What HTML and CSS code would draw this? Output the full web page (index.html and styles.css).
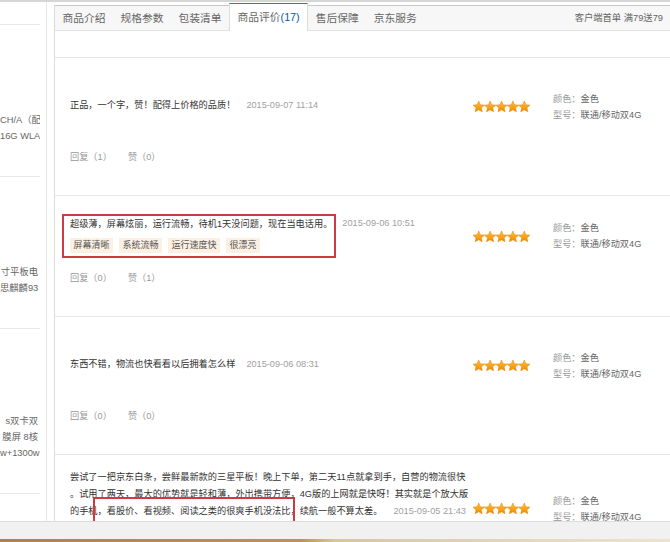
FILE: index.html
```html
<!DOCTYPE html>
<html lang="zh-CN">
<head>
<meta charset="utf-8">
<title>商品评价</title>
<link rel="stylesheet" href="styles.css">
</head>
<body>
<svg class="svg-defs" aria-hidden="true">
  <defs>
    <linearGradient id="sg" x1="0" y1="0" x2="0" y2="1">
      <stop offset="0" stop-color="#ffc43a"/>
      <stop offset="1" stop-color="#f08600"/>
    </linearGradient>
    <polygon id="star" points="0,-6 1.65,-2.27 5.71,-1.85 2.66,0.87 3.53,4.85 0,2.8 -3.53,4.85 -2.66,0.87 -5.71,-1.85 -1.65,-2.27" fill="url(#sg)" stroke="#e58300" stroke-width="0.5" stroke-linejoin="round"/>
  </defs>
</svg>

<div class="page">
  <aside class="sidebar">
    <div class="side-item cut"></div>
    <div class="side-item"><span class="line">CH/A（配</span><span class="line">16G WLA</span></div>
    <div class="side-item"><span class="line">寸平板电</span><span class="line">思麒麟93</span></div>
    <div class="side-item tall"><span class="line">s双卡双</span><span class="line">膜屏 8核</span><span class="line">w+1300w</span></div>
  </aside>

  <main class="detail">
    <nav class="tabbar">
      <span class="tab">商品介绍</span>
      <span class="tab">规格参数</span>
      <span class="tab">包装清单</span>
      <span class="tab active">商品评价<span class="count">(17)</span></span>
      <span class="tab">售后保障</span>
      <span class="tab">京东服务</span>
      <span class="tab-extra">客户端首单 满79送79</span>
    </nav>

    <section class="reviews">
      <article class="review">
        <div class="review-main">
          <div class="comment-col single">正品，一个字，赞！配得上价格的品质！<span class="date">2015-09-07 11:14</span></div>
          <div class="side">
            <svg class="stars" viewBox="0 0 57 11"><use href="#star" x="5.7" y="6"/><use href="#star" x="17.1" y="6"/><use href="#star" x="28.5" y="6"/><use href="#star" x="39.9" y="6"/><use href="#star" x="51.3" y="6"/></svg>
            <div class="attrs">
              <div><span class="k">颜色：</span>金色</div>
              <div><span class="k">型号：</span>联通/移动双4G</div>
            </div>
          </div>
        </div>
        <div class="reply"><span>回复（1）</span><span class="like">赞（0）</span></div>
      </article>

      <article class="review">
        <div class="review-main">
          <div class="comment-col tagged">
            <div class="mark-box">
              <div class="text">超级薄，屏幕炫丽，运行流畅，待机1天没问题，现在当电话用。</div>
              <div class="tags">
                <span class="tag">屏幕清晰</span>
                <span class="tag">系统流畅</span>
                <span class="tag">运行速度快</span>
                <span class="tag">很漂亮</span>
              </div>
            </div>
            <span class="date">2015-09-06 10:51</span>
          </div>
          <div class="side">
            <svg class="stars" viewBox="0 0 57 11"><use href="#star" x="5.7" y="6"/><use href="#star" x="17.1" y="6"/><use href="#star" x="28.5" y="6"/><use href="#star" x="39.9" y="6"/><use href="#star" x="51.3" y="6"/></svg>
            <div class="attrs">
              <div><span class="k">颜色：</span>金色</div>
              <div><span class="k">型号：</span>联通/移动双4G</div>
            </div>
          </div>
        </div>
        <div class="reply"><span>回复（0）</span><span class="like">赞（1）</span></div>
      </article>

      <article class="review">
        <div class="review-main">
          <div class="comment-col single">东西不错，物流也快看看以后拥着怎么样<span class="date">2015-09-06 08:31</span></div>
          <div class="side">
            <svg class="stars" viewBox="0 0 57 11"><use href="#star" x="5.7" y="6"/><use href="#star" x="17.1" y="6"/><use href="#star" x="28.5" y="6"/><use href="#star" x="39.9" y="6"/><use href="#star" x="51.3" y="6"/></svg>
            <div class="attrs">
              <div><span class="k">颜色：</span>金色</div>
              <div><span class="k">型号：</span>联通/移动双4G</div>
            </div>
          </div>
        </div>
        <div class="reply"><span>回复（0）</span><span class="like">赞（0）</span></div>
      </article>

      <article class="review last">
        <div class="review-main">
          <div class="comment-col multi">尝试了一把京东白条，尝鲜最新款的三星平板！晚上下单，第二天11点就拿到手，自营的物流很快<br>。试用了两天，最大的优势就是轻和薄，外出携带方便，4G版的上网就是快呀！其实就是个放大版<br>的手机，看股价、看视频、阅读之类的很爽手机没法比，续航一般不算太差。<span class="date">2015-09-05 21:43</span></div>
          <div class="side">
            <svg class="stars" viewBox="0 0 57 11"><use href="#star" x="5.7" y="6"/><use href="#star" x="17.1" y="6"/><use href="#star" x="28.5" y="6"/><use href="#star" x="39.9" y="6"/><use href="#star" x="51.3" y="6"/></svg>
            <div class="attrs">
              <div><span class="k">颜色：</span>金色</div>
              <div><span class="k">型号：</span>联通/移动双4G</div>
            </div>
          </div>
        </div>
        <div class="annot"></div>
      </article>
    </section>
  </main>
</div>

<div class="bottombar"><div class="goldline"></div></div>
</body>
</html>
```
FILE: styles.css
```css
html, body {
  margin: 0;
  height: 100%;
  overflow: hidden;
}

body {
  font-family: "Liberation Sans", "Noto Sans CJK SC", sans-serif;
  font-size: 9.2px;
  color: #333;
  background: #fff;
  border-top: 2px solid #d6d6d6;
  box-sizing: border-box;
}

.svg-defs {
  position: absolute;
  width: 0;
  height: 0;
  overflow: hidden;
}

.page {
  display: flex;
  align-items: stretch;
}

/* left column */
.sidebar {
  flex: none;
  width: 40px;
  padding-right: 6px;
  border-right: 1px solid #e8e8e8;
}

.side-item {
  border-bottom: 1px solid #e8e8e8;
  padding: 87px 2px 32px 0;
  text-align: right;
  white-space: nowrap;
  overflow: hidden;
  line-height: 16px;
  color: #666;
  font-size: 9.3px;
}

.side-item.cut {
  height: 22px;
  padding: 0;
}

.side-item.tall {
  padding-top: 84px;
}

.side-item .line {
  display: block;
}

/* main column */
.detail {
  flex: 1;
  min-width: 0;
  margin-left: 7px;
  margin-top: 3px;
  border-left: 1px solid #dcdcdc;
}

.tabbar {
  display: flex;
  height: 24px;
  border-top: 1px solid #c8c8c8;
  border-bottom: 1px solid #e2e2e2;
  background: #f7f7f7;
  font-size: 10.75px;
  color: #666;
}

.tab {
  padding: 0 7.5px;
  line-height: 24px;
  white-space: nowrap;
}

.tab.active {
  margin: -3px 0 -1px;
  border-top: 1px solid #e4393c;
  border-left: 1px solid #dcdcdc;
  border-right: 1px solid #dcdcdc;
  background: #fff;
  line-height: 27px;
}

.tab .count {
  color: #005aa0;
}

.tab-extra {
  margin-left: auto;
  padding-right: 7px;
  font-size: 9.3px;
  line-height: 24px;
  color: #666;
  white-space: nowrap;
}

.reviews {
  margin-top: 26px;
}

.review {
  position: relative;
  border-top: 1px solid #e6e6e6;
  padding: 18px 0 29px 15px;
}

.review.last {
  padding-top: 14px;
}

.review-main {
  display: flex;
  align-items: center;
}

.comment-col {
  flex: none;
  width: 403px;
  line-height: 17px;
  white-space: nowrap;
}

.comment-col.single {
  padding: 21px 0 23px;
}

.comment-col.multi {
  padding-bottom: 28px;
}

.comment-col.tagged {
  display: flex;
  align-items: flex-start;
}

.date {
  color: #a0a0a0;
  margin-left: 11px;
}

.tagged .date {
  margin-left: 6px;
  margin-top: 1px;
}

.mark-box {
  margin-left: -8px;
  padding: 0 2px 3px 6px;
  border: 2px solid #cc3a42;
}

.tags {
  display: flex;
  gap: 6px;
  margin-top: 5px;
}

.tag {
  background: #fcf0e3;
  color: #555;
  font-size: 9px;
  line-height: 15px;
  padding: 0 3.5px;
}

.side {
  display: flex;
  align-items: center;
}

.stars {
  display: block;
  width: 57px;
  height: 11px;
}

.attrs {
  margin-left: 23px;
  line-height: 16px;
  color: #666;
  white-space: nowrap;
}

.attrs .k {
  color: #999;
}

.reply {
  margin-top: 12px;
  line-height: 17px;
  color: #999;
}

.reply .like {
  margin-left: 16px;
}

.annot {
  position: absolute;
  left: 38px;
  top: 42px;
  width: 198px;
  height: 23px;
  border: 2px solid #cc3a42;
}

.bottombar {
  position: fixed;
  left: 0;
  right: 0;
  bottom: 0;
  height: 20px;
  display: flex;
  flex-direction: column;
  background: #f1f1f1;
  border-top: 1px solid #dcdcdc;
}

.goldline {
  margin-top: auto;
  height: 3px;
  background: linear-gradient(to right, #a88450 0%, #b8935c 45%, #d7c6a2 50%, #ece3d0 100%);
}
```
